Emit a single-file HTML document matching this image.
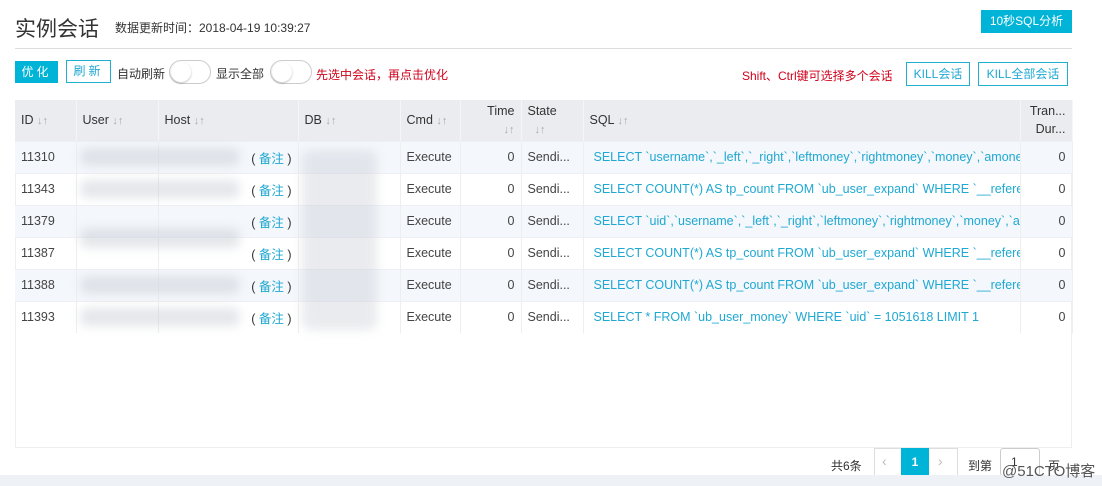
<!DOCTYPE html>
<html><head><meta charset="utf-8"><style>
*{margin:0;padding:0;box-sizing:border-box}
body{width:1102px;height:486px;background:#fff;font-family:"Liberation Sans","Noto Sans CJK SC",sans-serif;font-size:12px;color:#333;position:relative;overflow:hidden}
.a{position:absolute;white-space:nowrap}
.btn{position:absolute;height:22px;line-height:20px;text-align:center;font-size:12px}
.tog{position:absolute;width:42px;height:24px;border:1px solid #ccc;border-radius:12px;background:#fff}
.tog:after{content:"";position:absolute;left:1px;top:1px;width:20px;height:20px;border-radius:50%;background:#fff;box-shadow:0 1px 2px rgba(0,0,0,.25)}
table{position:absolute;left:15px;top:100px;width:1057px;border-collapse:collapse;table-layout:fixed}
th{background:#eaecf0;font-weight:normal;text-align:left;color:#333;height:41px;padding:0 6px;border-right:1px solid #f5f5f5;font-size:12.5px;line-height:20px}
td{height:32px;padding:0 6px;border-right:1px solid #eee;border-top:1px solid #eceff3;white-space:nowrap;overflow:hidden;font-size:12.5px;color:#444}
tr:nth-child(even) td{background:#f4f7fb}
.s{color:#aaa;font-size:11px}
td.sql{color:#1fa8d2;padding-left:10px}
.r{text-align:right}
.blur{position:absolute;background:#c9ced6;filter:blur(5px);opacity:.5;border-radius:8px}
.note{color:#1fa8d2}
</style></head><body>
<div class="a" style="left:15px;top:13px;font-size:21px;color:#333">实例会话</div>
<div class="a" style="left:115px;top:19px;font-size:12px;color:#333">数据更新时间：2018-04-19 10:39:27</div>
<div class="btn" style="left:981px;top:10px;width:91px;height:23px;line-height:23px;background:#00b4d8;color:#fff">10秒SQL分析</div>
<div class="a" style="left:15px;top:48px;width:1057px;height:1px;background:#ddd"></div>

<div class="btn" style="left:15px;top:61px;width:43px;height:22px;background:#00b4d8;color:#fff;line-height:22px;letter-spacing:3px">优化</div>
<div class="btn" style="left:66px;top:60px;width:45px;height:23px;border:1px solid #1fb0cf;color:#1fa8d2;letter-spacing:3px">刷新</div>
<div class="a" style="left:117px;top:65px">自动刷新</div>
<div class="tog" style="left:169px;top:60px"></div>
<div class="a" style="left:216px;top:65px">显示全部</div>
<div class="tog" style="left:270px;top:60px"></div>
<div class="a" style="left:316px;top:66px;color:#d0021b">先选中会话，再点击优化</div>
<div class="a" style="left:742px;top:67px;color:#d0021b">Shift、Ctrl键可选择多个会话</div>
<div class="btn" style="left:906px;top:62px;width:64px;height:24px;line-height:22px;border:1px solid #1fb0cf;color:#1fa8d2">KILL会话</div>
<div class="btn" style="left:978px;top:62px;width:90px;height:24px;line-height:22px;border:1px solid #1fb0cf;color:#1fa8d2">KILL全部会话</div>

<div class="a" style="left:15px;top:100px;width:1057px;height:348px;border:1px solid #eee;border-top:none"></div>
<table>
<colgroup><col style="width:61px"><col style="width:82px"><col style="width:140px"><col style="width:102px"><col style="width:60px"><col style="width:61px"><col style="width:62px"><col style="width:437px"><col style="width:52px"></colgroup>
<tr><th>ID <span class="s">↓↑</span></th><th>User <span class="s">↓↑</span></th><th>Host <span class="s">↓↑</span></th><th>DB <span class="s">↓↑</span></th><th>Cmd <span class="s">↓↑</span></th><th class="r" style="line-height:18px">Time<br><span class="s">↓↑</span></th><th style="line-height:18px">State<br>&nbsp;&nbsp;<span class="s">↓↑</span></th><th>SQL <span class="s">↓↑</span></th><th class="r" style="line-height:18px">Tran...<br>Dur...</th></tr>
<tr><td>11310</td><td></td><td class="r"><span class="note"><span style="color:#333">(</span> 备注 <span style="color:#333">)</span></span></td><td></td><td>Execute</td><td class="r">0</td><td>Sendi...</td><td class="sql">SELECT `username`,`_left`,`_right`,`leftmoney`,`rightmoney`,`money`,`amoney`</td><td class="r">0</td></tr>
<tr><td>11343</td><td></td><td class="r"><span class="note"><span style="color:#333">(</span> 备注 <span style="color:#333">)</span></span></td><td></td><td>Execute</td><td class="r">0</td><td>Sendi...</td><td class="sql">SELECT COUNT(*) AS tp_count FROM `ub_user_expand` WHERE `__referee`</td><td class="r">0</td></tr>
<tr><td>11379</td><td></td><td class="r"><span class="note"><span style="color:#333">(</span> 备注 <span style="color:#333">)</span></span></td><td></td><td>Execute</td><td class="r">0</td><td>Sendi...</td><td class="sql">SELECT `uid`,`username`,`_left`,`_right`,`leftmoney`,`rightmoney`,`money`,`amoney`</td><td class="r">0</td></tr>
<tr><td>11387</td><td></td><td class="r"><span class="note"><span style="color:#333">(</span> 备注 <span style="color:#333">)</span></span></td><td></td><td>Execute</td><td class="r">0</td><td>Sendi...</td><td class="sql">SELECT COUNT(*) AS tp_count FROM `ub_user_expand` WHERE `__referee`</td><td class="r">0</td></tr>
<tr><td>11388</td><td></td><td class="r"><span class="note"><span style="color:#333">(</span> 备注 <span style="color:#333">)</span></span></td><td></td><td>Execute</td><td class="r">0</td><td>Sendi...</td><td class="sql">SELECT COUNT(*) AS tp_count FROM `ub_user_expand` WHERE `__referee`</td><td class="r">0</td></tr>
<tr><td>11393</td><td></td><td class="r"><span class="note"><span style="color:#333">(</span> 备注 <span style="color:#333">)</span></span></td><td></td><td>Execute</td><td class="r">0</td><td>Sendi...</td><td class="sql">SELECT * FROM `ub_user_money` WHERE `uid` = 1051618 LIMIT 1</td><td class="r">0</td></tr>
</table>
<div class="blur" style="left:80px;top:148px;width:160px;height:18px"></div>
<div class="blur" style="left:80px;top:180px;width:160px;height:18px"></div>
<div class="blur" style="left:80px;top:228px;width:160px;height:20px"></div>
<div class="blur" style="left:80px;top:276px;width:160px;height:18px"></div>
<div class="blur" style="left:80px;top:308px;width:160px;height:18px"></div>
<div class="blur" style="left:302px;top:150px;width:75px;height:180px;opacity:.4"></div>

<div class="a" style="left:831px;top:457px">共6条</div>
<div class="a" style="left:874px;top:448px;width:84px;height:28px;border:1px solid #ddd;background:#fff"></div>
<div class="a" style="left:882px;top:453px;color:#bbb;font-size:14px">‹</div>
<div class="a" style="left:901px;top:448px;width:28px;height:28px;background:#00b4d8;color:#fff;font-weight:bold;text-align:center;line-height:28px">1</div>
<div class="a" style="left:938px;top:453px;color:#bbb;font-size:14px">›</div>
<div class="a" style="left:968px;top:457px">到第</div>
<div class="a" style="left:1000px;top:448px;width:40px;height:28px;border:1px solid #ccc;border-radius:3px;padding:6px 0 0 10px">1</div>
<div class="a" style="left:1048px;top:457px">页</div>
<div class="a" style="left:0;top:475px;width:1102px;height:11px;background:#eef2f7"></div>
<div class="a" style="left:1002px;top:460px;font-size:15px;color:#555">@51CTO博客</div>
</body></html>
